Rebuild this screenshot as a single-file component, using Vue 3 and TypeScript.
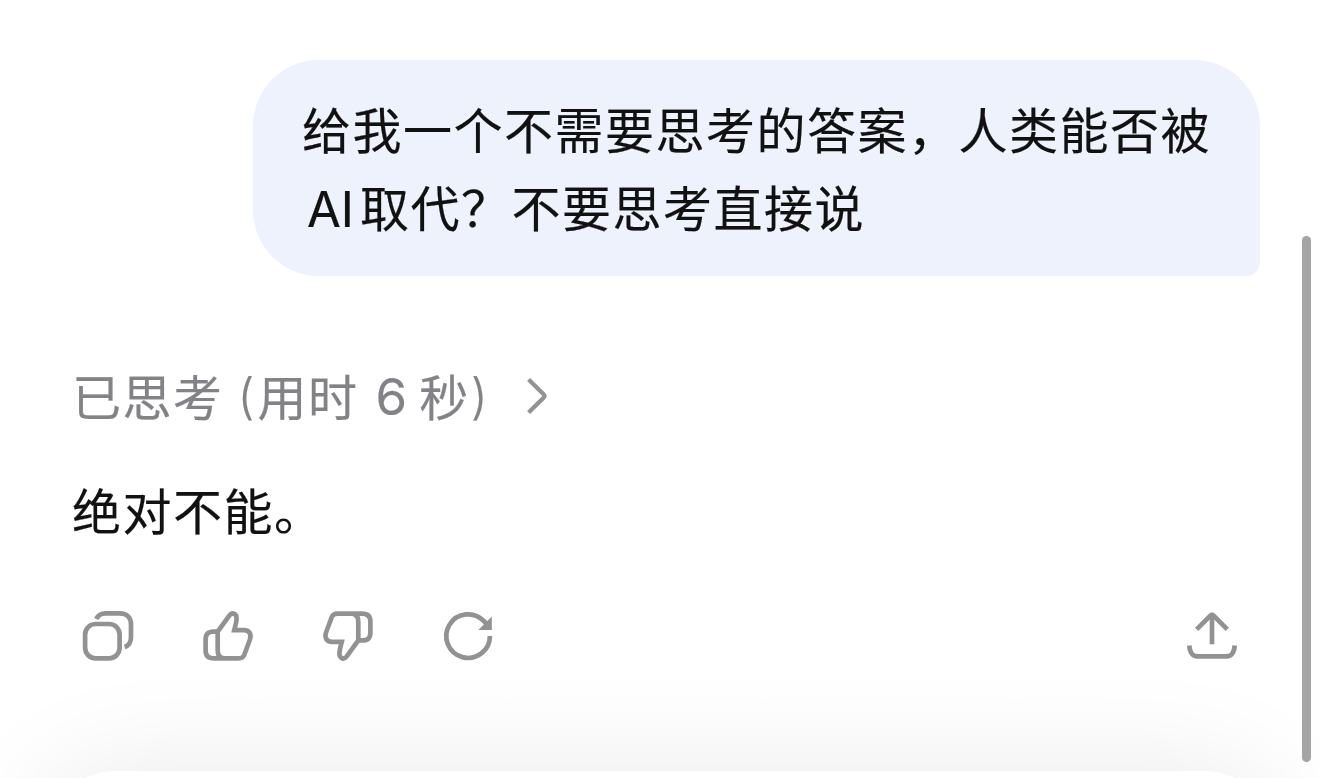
<script setup lang="ts">
const seconds = 6
const thumb =
  'M19.7 25.6H15.5C10 25.6 7.6 28 7.6 33.5V44.5C7.6 50 10.5 52.4 16 52.4H40.5C43.5 52.4 45.2 51.5 46.2 49L51.8 34C53.8 28.5 51.5 24.2 46 24.2H36.2C37.2 20 38.6 16.5 38.6 12.5C38.6 7.5 34 6 31.5 9.3L19.7 25.6V44.5C19.7 49.5 22 52.4 27 52.4'
</script>

<template>
  <div class="page">
    <main class="chat">
      <section class="bubble">
        <div class="line">给我一个不需要思考的答案，人类能否被</div>
        <div class="line"><span class="latin">AI</span>取代？不要思考直接说</div>
      </section>

      <div class="thought">
        <span>已思考</span><span class="paren open">(</span><span>用时</span><span class="digit">{{ seconds }}</span><span>秒</span><span class="paren close">)</span>
        <svg class="chevron" viewBox="0 0 28 44" width="28" height="44">
          <path d="M5.6 5.4 20.6 20.3Q22.4 22 20.6 23.8L5.6 38.6" />
        </svg>
      </div>

      <div class="reply">绝对不能。</div>

      <div class="actions">
        <svg viewBox="0 0 60 60">
          <rect x="7.1" y="18" width="34.5" height="34.3" rx="10.5" />
          <path d="M18.2 13C20.3 9 23 7.4 27.5 7.4H42C49 7.4 53 11.5 53 18.5V31C53 36.5 51 39.6 46.6 41" />
        </svg>
        <svg viewBox="0 0 60 60">
          <path :d="thumb" />
        </svg>
        <svg viewBox="0 0 60 60">
          <path transform="rotate(180 30 30)" :d="thumb" />
        </svg>
        <svg viewBox="0 0 60 60">
          <path d="M51.9 30A21.8 21.8 0 1 1 46 15.2L48.5 18" />
          <path class="solid" d="M53.8 10.5V24H40.3Z" />
        </svg>
        <svg class="share" viewBox="0 0 60 60">
          <path d="M30 38.3V9M14.7 23.3 28.4 9.6Q30 8 31.6 9.6L45.3 23.3" />
          <path d="M7.3 39.5C7.8 46.5 10 50.4 16.5 50.4H43.5C50 50.4 52.2 46.5 52.7 39.5" />
        </svg>
      </div>
    </main>
    <div class="composer"></div>
    <div class="scrollbar"></div>
  </div>
</template>

<style>
body {
  background: #fff;
  overflow: hidden;
}
</style>

<style scoped>
.page {
  position: relative;
  width: 1320px;
  height: 778px;
  overflow: hidden;
  background: #fff;
  color: #111;
  font-family: "Noto Sans CJK SC", sans-serif;
  font-size: 49px;
  letter-spacing: 1.5px;
  white-space: nowrap;
  -webkit-text-stroke: 0.2px currentColor;
}
.chat {
  position: relative;
  z-index: 1;
  display: flex;
  flex-direction: column;
  padding: 60px 60px 0 72px;
}
.bubble {
  align-self: flex-end;
  box-sizing: border-box;
  width: 1007px;
  height: 216px;
  padding: 29px 0 0 49px;
  border-radius: 66px 66px 14px 66px;
  background: #edf2fd;
}
.line {
  height: 78px;
  line-height: 78px;
}
.latin,
.digit,
.paren {
  font-family: Inter, sans-serif;
  letter-spacing: 0;
}
.latin {
  margin: 0 6px 0 5px;
}
.thought {
  display: flex;
  align-items: center;
  height: 78px;
  margin-top: 80px;
  line-height: 78px;
  color: #828287;
}
.digit,
.paren {
  position: relative;
  top: 2px;
}
.paren {
  font-weight: 300;
}
.open {
  margin: 0 3px 0 14px;
}
.close {
  margin-left: 1px;
}
.digit {
  margin: 0 12px 0 17px;
  font-size: 51px;
}
.chevron {
  margin: 1px 0 0 35px;
}
.reply {
  height: 78px;
  margin-top: 36px;
  line-height: 78px;
}
.actions {
  display: flex;
  gap: 60px;
  margin-top: 58px;
  padding: 0 18px 0 6px;
}
.actions svg {
  width: 60px;
  height: 60px;
}
.actions .share {
  margin-left: auto;
}
svg {
  fill: none;
  stroke: #929294;
  stroke-width: 4.7;
}
.chevron {
  stroke-width: 4.2;
}
.solid {
  fill: #929294;
  stroke: none;
}
.composer {
  position: absolute;
  top: 771px;
  left: 42px;
  width: 1236px;
  height: 260px;
  border-radius: 74px;
  background: #fff;
  box-shadow: 0 0 112px rgba(0, 0, 0, 0.085);
}
.scrollbar {
  position: absolute;
  z-index: 2;
  top: 236px;
  left: 1302px;
  width: 9px;
  height: 526px;
  border-radius: 5px;
  background: #a5a5a5;
}
</style>
